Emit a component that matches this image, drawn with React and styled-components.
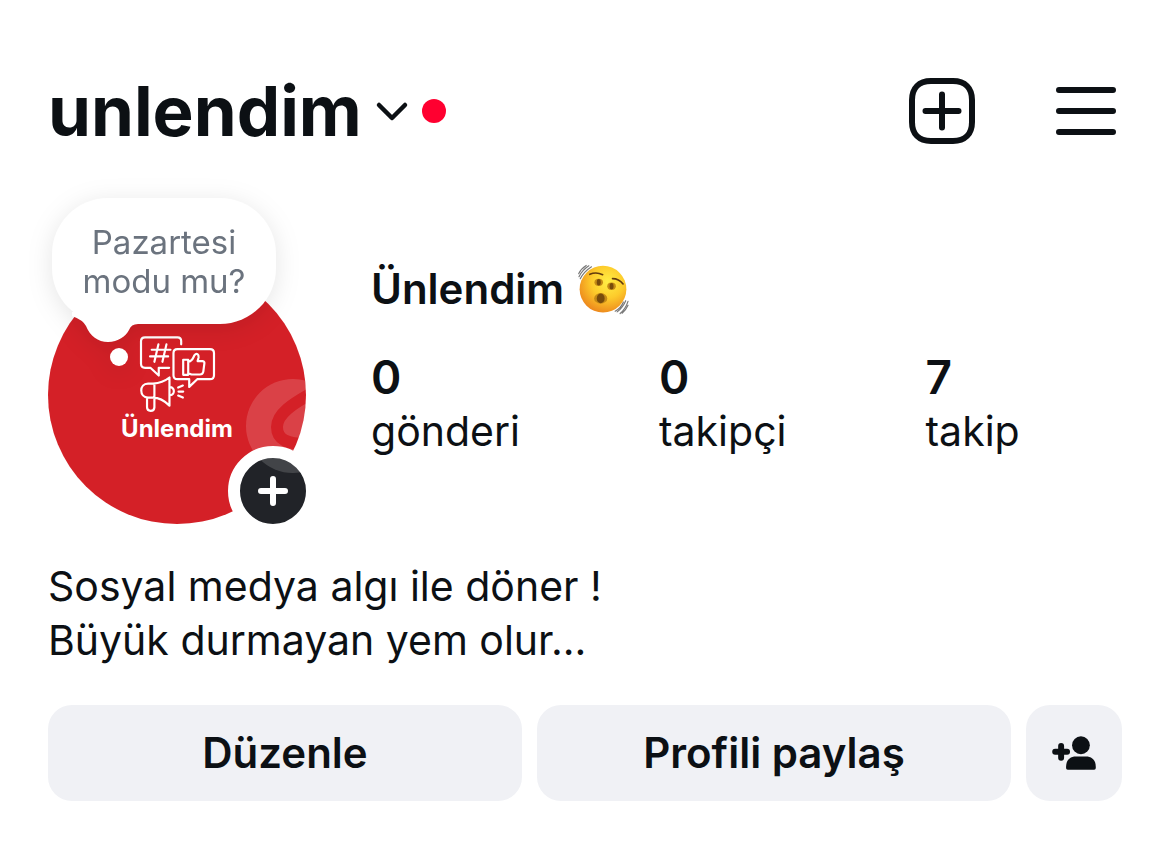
import React from "react";
import styled, { createGlobalStyle } from "styled-components";

const colors = {
  text: "#0c1014",
  muted: "#6b737e",
  surface: "#f0f1f5",
  red: "#d42027",
  notification: "#ff0030",
  badge: "#212328",
};

const GlobalStyle = createGlobalStyle`
  * {
    box-sizing: border-box;
  }
  body {
    margin: 0;
    background: #fff;
    color: ${colors.text};
    font-family: Inter, "Liberation Sans", sans-serif;
    font-size: 41px;
    line-height: 54px;
  }
  h1, h2, p, ul {
    margin: 0;
    padding: 0;
  }
  button {
    border: 0;
    padding: 0;
    background: none;
    color: inherit;
    font: inherit;
    cursor: pointer;
  }
  svg {
    display: block;
    flex: none;
  }
`;

const Page = styled.main`
  padding: 78px 48px 48px;
`;
const Header = styled.header`
  display: flex;
  align-items: center;
  justify-content: space-between;
  height: 66px;
  padding-right: 6px;
`;
const Account = styled.button`
  display: flex;
  align-items: center;
  gap: 13px;
`;
const Username = styled.h1`
  font-size: 69px;
  line-height: 66px;
  font-weight: 700;
`;
const Dot = styled.span`
  width: 24px;
  height: 24px;
  border-radius: 50%;
  background: ${colors.notification};
`;
const Actions = styled.div`
  display: flex;
  align-items: center;
  gap: 81px;
`;
const Profile = styled.section`
  display: flex;
  gap: 65px;
  margin-top: 118px;
`;
const Avatar = styled.div`
  position: relative;
  flex: none;
  display: flex;
  flex-direction: column;
  align-items: center;
  width: 258px;
  height: 258px;
  margin-top: 4px;
  padding-top: 69px;
  border-radius: 50%;
  background: ${colors.red};
`;
const Brand = styled.span`
  margin-top: 3px;
  color: #fff;
  font-size: 24px;
  line-height: 28px;
  font-weight: 700;
`;
const Note = styled.button`
  position: absolute;
  top: -68px;
  left: 4px;
  width: 224px;
  padding: 25px 24px 23px;
  border-radius: 56px;
  background: #fff;
  color: ${colors.muted};
  font-size: 33px;
  line-height: 39px;
  white-space: nowrap;
  filter: drop-shadow(0 4px 12px rgba(0, 0, 0, 0.1));

  span {
    display: flex;
    justify-content: center;
  }
`;
const NoteTail = styled.svg`
  position: absolute;
  top: 114px;
  left: 20px;
`;
const AddStory = styled.button`
  position: absolute;
  right: -12px;
  bottom: -12px;
  display: flex;
  align-items: center;
  justify-content: center;
  width: 90px;
  height: 90px;
  border: 12px solid #fff;
  border-radius: 50%;
  background: ${colors.badge};
`;
const Sheen = styled.svg`
  position: absolute;
  inset: 0;
  pointer-events: none;
`;
const Info = styled.div`
  flex: 1;
`;
const Name = styled.h2`
  display: flex;
  align-items: center;
  gap: 14px;
  font-size: 42px;
  font-weight: 600;
`;
const Stats = styled.ul`
  display: flex;
  gap: 139px;
  margin-top: 34px;
  list-style: none;
`;
const Stat = styled.li`
  display: flex;
  flex-direction: column;

  strong {
    font-size: 46px;
    font-weight: 600;
  }
`;
const Bio = styled.p`
  margin-top: 35px;
`;
const Buttons = styled.div`
  display: flex;
  gap: 15px;
  margin-top: 38px;
`;
const Button = styled.button`
  flex: ${(props) => (props.$square ? "none" : "1")};
  display: flex;
  align-items: center;
  justify-content: center;
  width: ${(props) => (props.$square ? "96px" : "auto")};
  height: 96px;
  border-radius: 24px;
  background: ${colors.surface};
  font-size: 42px;
  font-weight: 600;
`;

const ChevronIcon = () => (
  <svg width="34" height="24" viewBox="0 0 34 24" fill="none">
    <path
      d="M4 6 17 19 30 6"
      stroke={colors.text}
      strokeWidth="4.5"
      strokeLinecap="round"
      strokeLinejoin="round"
    />
  </svg>
);

const CreateIcon = () => (
  <svg width="66" height="66" viewBox="0 0 66 66" fill="none">
    <path
      d="M22 3H44C56 3 63 10 63 22V44C63 56 56 63 44 63H22C10 63 3 56 3 44V22C3 10 10 3 22 3ZM33 16.500V49.500M16.500 33H49.500"
      stroke={colors.text}
      strokeWidth="6"
      strokeLinecap="round"
    />
  </svg>
);

const MenuIcon = () => (
  <svg width="60" height="48" viewBox="0 0 60 48" fill="none">
    <path
      d="M3 3H57M3 24H57M3 45H57"
      stroke={colors.text}
      strokeWidth="6"
      strokeLinecap="round"
    />
  </svg>
);

const PlusIcon = () => (
  <svg width="30" height="30" viewBox="0 0 30 30">
    <path
      d="M15 3V27M3 15H27"
      stroke="#fff"
      strokeWidth="6"
      strokeLinecap="round"
    />
  </svg>
);

const AddPersonIcon = () => (
  <svg width="44" height="34" viewBox="126 138 132 103" fill={colors.text}>
    <path
      d="M153 168V204M135 186H171"
      stroke={colors.text}
      strokeWidth="18"
      strokeLinecap="round"
    />
    <circle cx="213" cy="166" r="27" />
    <path d="M168 235V231C168 211 180 200 198 200H228C246 200 258 211 258 231V235Q258 240 253 240H173Q168 240 168 235Z" />
  </svg>
);

// hashtag and like bubbles above a megaphone
const BrandIcon = () => (
  <svg
    width="77"
    height="77"
    viewBox="88 30 230 230"
    fill="none"
    stroke="#fff"
    strokeWidth="6.5"
    strokeLinecap="round"
    strokeLinejoin="round"
  >
    <path d="M214 58V48Q214 37 203 37H106Q94 37 94 49V116Q94 128 106 128H122L147 151V128H178" />
    <path d="M146 58 134 110M170 58 158 110M126 74H182M121 94H175" />
    <path d="M203 72H300Q312 72 312 84V150Q312 162 300 162H262L238 185V162H203Q191 162 191 150V84Q191 72 203 72Z" />
    <path d="M220 104H235V149H220ZM235 110C248 109 249 99 254 90C260 82 267 88 266 97L263 108H278Q285 109 283 117L280 140Q278 148 270 148H245L235 144" />
    <path d="M179 157V241C160 222 147 217 130 217H115C88 217 88 175 115 175H130C149 174 164 169 179 157ZM134 175V246C133 260 112 260 112 246V217M179 186C196 184 197 211 179 210" />
    <path d="M205 187 219 181M206 199H220M205 211 219 217" />
  </svg>
);

const ShakingFace = () => (
  <svg
    width="51"
    height="51"
    viewBox="50 40 155 152"
    role="img"
    aria-label="Shaking face"
  >
    <defs>
      <radialGradient id="face" cx="0.6" cy="0.34" r="0.7">
        <stop offset="0" stopColor="#ffee45" />
        <stop offset="0.5" stopColor="#fdcb2b" />
        <stop offset="1" stopColor="#ec851c" />
      </radialGradient>
    </defs>
    <g fill="none" stroke="#777" strokeWidth="3.5" strokeLinecap="round">
      <path d="M52 68Q59 53 75 43M53 77Q63 57 83 44M57 83Q68 62 91 47" />
      <path d="M202 152Q195 174 178 189M202 164Q195 180 184 188M195 150Q187 170 169 184M188 154Q181 172 163 182" />
    </g>
    <circle cx="126" cy="115" r="71" fill="url(#face)" />
    <path
      d="M86 70Q105 61 125 71M155 83Q174 83 187 99"
      fill="none"
      stroke="#633b0d"
      strokeWidth="5"
      strokeLinecap="round"
    />
    <g fill="#c48a16">
      <ellipse cx="113" cy="94" rx="13" ry="11" />
      <ellipse cx="152" cy="106" rx="13" ry="11" />
      <ellipse cx="119" cy="143" rx="20" ry="16" />
    </g>
    <g fill="#774b0c">
      <ellipse cx="113" cy="94" rx="6" ry="10" />
      <ellipse cx="152" cy="106" rx="6" ry="10" />
      <ellipse cx="119" cy="143" rx="12" ry="15" />
    </g>
  </svg>
);

const stats = [
  { value: 0, label: "gönderi" },
  { value: 0, label: "takipçi" },
  { value: 7, label: "takip" },
];

const App = () => {
  return (
    <>
      <GlobalStyle />
      <Page>
        <Header>
          <Account>
            <Username>unlendim</Username>
            <ChevronIcon />
            <Dot />
          </Account>
          <Actions>
            <button aria-label="Oluştur">
              <CreateIcon />
            </button>
            <button aria-label="Menü">
              <MenuIcon />
            </button>
          </Actions>
        </Header>
        <Profile>
          <Avatar>
            <BrandIcon />
            <Brand>Ünlendim</Brand>
            <Note>
              <NoteTail width="66" height="56" viewBox="0 0 66 56" fill="#fff">
                <path d="M0 0V4Q11 8 14 14C18 24 26 30 36 30C46 30 54 24 57 18Q59 12 66 12V0Z" />
                <circle cx="47" cy="45" r="9" />
              </NoteTail>
              <span>Pazartesi</span>
              <span>modu mu?</span>
            </Note>
            <AddStory aria-label="Hikaye ekle">
              <PlusIcon />
            </AddStory>
            <Sheen width="258" height="258" viewBox="0 0 258 258">
              <mask id="swirl">
                <circle cx="245" cy="160" r="47" fill="#fff" />
                <path
                  d="M266 126C244 138 229 148 229 161C229 173 238 179 264 178"
                  fill="none"
                  stroke="#000"
                  strokeWidth="12"
                />
              </mask>
              <rect
                width="258"
                height="258"
                fill="#fff"
                opacity="0.15"
                mask="url(#swirl)"
              />
            </Sheen>
          </Avatar>
          <Info>
            <Name>
              Ünlendim
              <ShakingFace />
            </Name>
            <Stats>
              {stats.map((stat) => (
                <Stat key={stat.label}>
                  <strong>{stat.value}</strong>
                  <span>{stat.label}</span>
                </Stat>
              ))}
            </Stats>
          </Info>
        </Profile>
        <Bio>
          Sosyal medya algı ile döner !
          <br />
          Büyük durmayan yem olur...
        </Bio>
        <Buttons>
          <Button>Düzenle</Button>
          <Button>Profili paylaş</Button>
          <Button $square aria-label="Kişi ekle">
            <AddPersonIcon />
          </Button>
        </Buttons>
      </Page>
    </>
  );
};

export default App;
